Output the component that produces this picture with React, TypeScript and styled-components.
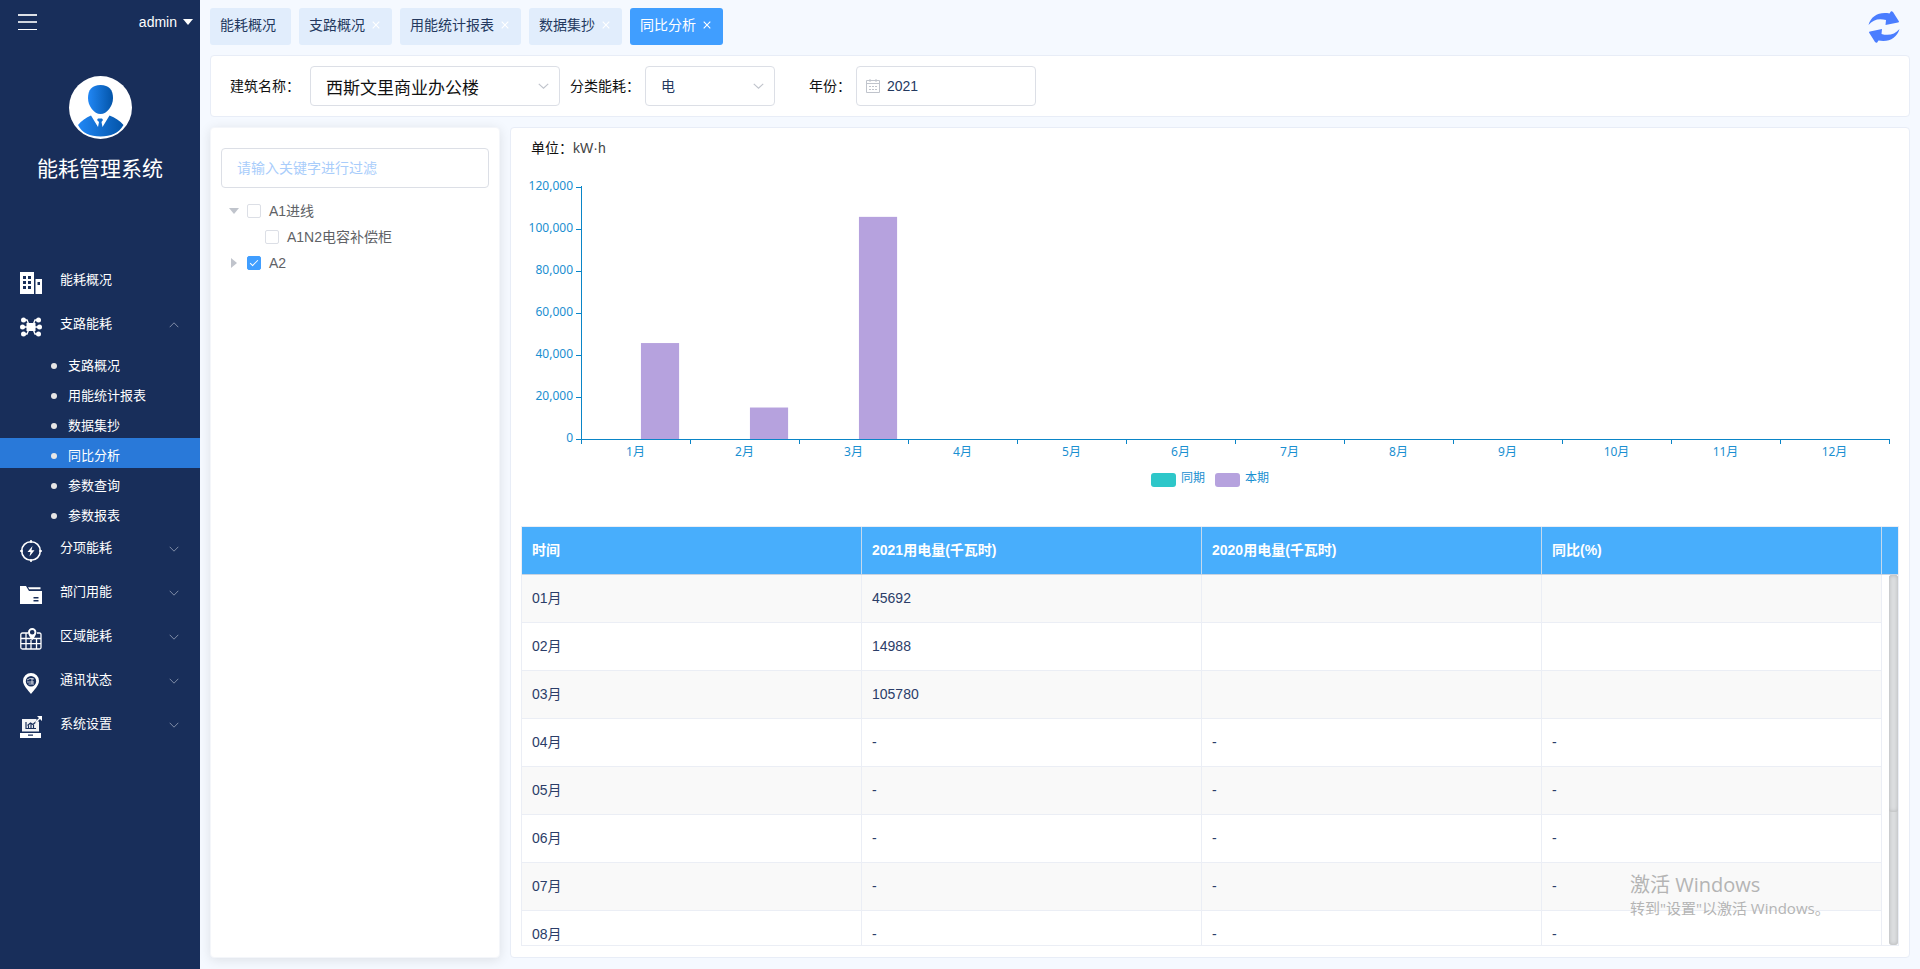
import React, { useLayoutEffect, useRef, useState } from 'react';
import styled, { createGlobalStyle } from 'styled-components';

const GlobalStyle = createGlobalStyle`
  *, *::before, *::after { box-sizing: border-box; }
  body {
    margin: 0;
    background: #f5f9ff;
    font-family: "Liberation Sans", "Noto Sans CJK SC", sans-serif;
    font-size: 14px;
    color: #111;
  }
  button, input, select { font-family: inherit; }
`;

const Shell = styled.div`
  display: flex;
  height: 100vh;
  min-height: 760px;
`;

/* ---------- Sidebar ---------- */

const Sidebar = styled.aside`
  flex: 0 0 200px;
  background: #182e5a;
  color: #fff;
`;

const SidebarTop = styled.div`
  display: flex;
  align-items: center;
  justify-content: space-between;
  height: 44px;
  padding: 0 7px 0 18px;
`;

const PlainButton = styled.button`
  display: flex;
  align-items: center;
  gap: 6px;
  padding: 0;
  border: 0;
  background: none;
  color: #fff;
  font-size: 14px;
  line-height: 20px;
  cursor: pointer;
`;

const Profile = styled.div`
  display: flex;
  flex-direction: column;
  align-items: center;
  height: 216px;
  padding-top: 32px;
`;

const SystemName = styled.h1`
  margin: 15px 0 0;
  font-size: 21px;
  font-weight: 400;
  line-height: 30px;
`;

const Menu = styled.ul`
  margin: 0;
  padding: 0;
  list-style: none;
`;

const MenuButton = styled.button`
  display: flex;
  align-items: center;
  width: 100%;
  height: 44px;
  padding: 0 21px 2px 20px;
  border: 0;
  background: none;
  color: #fff;
  font-size: 13px;
  line-height: 20px;
  cursor: pointer;

  svg:first-child { margin-top: 4px; }
  span {
    flex: 1;
    margin-left: 18px;
    padding-bottom: 2px;
    text-align: left;
  }
`;

const SubLink = styled.a<{ $active?: boolean }>`
  display: flex;
  align-items: center;
  gap: 11px;
  height: 30px;
  padding: 6px 0 0 51px;
  background: ${(p) => (p.$active ? '#2979d9' : 'transparent')};
  color: #fff;
  font-size: 13px;
  line-height: 20px;
  text-decoration: none;

  &::before {
    content: '';
    width: 6px;
    height: 6px;
    border-radius: 50%;
    background: #e6e6e6;
  }
`;

/* ---------- Content ---------- */

const Content = styled.main`
  flex: 1;
  min-width: 0;
  display: flex;
  flex-direction: column;
  gap: 10px;
  padding: 8px 10px 11px;
`;

const TopBar = styled.div`
  display: flex;
  align-items: center;
  justify-content: space-between;
  height: 37px;
  padding-right: 10px;
`;

const Tabs = styled.nav`
  display: flex;
  gap: 8px;
`;

const Tab = styled.div<{ $active?: boolean }>`
  display: flex;
  align-items: center;
  gap: 7px;
  height: 37px;
  min-width: 81px;
  padding: 0 12px 3px 10px;
  border-radius: 3px;
  background: ${(p) => (p.$active ? '#409eff' : '#e1edfc')};
  color: ${(p) => (p.$active ? '#fff' : '#24395f')};
  font-size: 14px;
  line-height: 20px;

  a {
    color: inherit;
    text-decoration: none;
  }
  button {
    display: flex;
    padding: 0;
    border: 0;
    background: none;
    color: #fff;
    cursor: pointer;
  }
`;

const Card = styled.section`
  border: 1px solid #e8edf7;
  border-radius: 4px;
  background: #fff;
`;

const FilterCard = styled(Card).attrs({ as: 'form' })`
  display: flex;
  align-items: center;
  height: 62px;
  padding: 0 19px;
`;

const FieldLabel = styled.label<{ $width: number }>`
  width: ${(p) => p.$width}px;
  font-size: 14px;
  line-height: 20px;
  white-space: nowrap;
`;

const Control = styled.div<{ $width?: number; $gap?: number }>`
  position: relative;
  width: ${(p) => (p.$width ? `${p.$width}px` : '100%')};
  margin-right: ${(p) => p.$gap ?? 0}px;

  svg {
    position: absolute;
    top: 50%;
    transform: translateY(-50%);
    pointer-events: none;
  }
  svg.arrow { right: 11px; }
  svg.prefix { left: 10px; }
`;

const boxStyle = `
  display: block;
  width: 100%;
  height: 40px;
  border: 1px solid #dcdfe6;
  border-radius: 4px;
  background: #fff;
  color: #24395f;
  outline: none;
`;

const Select = styled.select<{ $script?: boolean }>`
  ${boxStyle}
  appearance: none;
  padding: 0 30px 0 15px;
  font-size: ${(p) => (p.$script ? 17 : 14)}px;
  ${(p) => p.$script && 'color: #111; font-family: KaiTi, STKaiti, "Noto Sans CJK SC", sans-serif;'}
`;

const TextInput = styled.input<{ $prefix?: boolean }>`
  ${boxStyle}
  padding: 0 15px 0 ${(p) => (p.$prefix ? 30 : 15)}px;
  font-size: 14px;

  &::placeholder { color: #a9cdfb; opacity: 1; }
`;

const Columns = styled.div`
  flex: 1;
  min-height: 0;
  display: flex;
  gap: 10px;
`;

const TreeCard = styled(Card)`
  flex: 0 0 290px;
  padding: 20px 10px;
  border-color: #f4f6fa;
  box-shadow: 0 2px 12px rgba(0, 0, 0, 0.1);
`;

const Tree = styled.ul`
  margin: 10px 0 0;
  padding: 0;
  list-style: none;
`;

const TreeRow = styled.li<{ $level: number }>`
  display: flex;
  align-items: center;
  height: 26px;
  padding-left: ${(p) => p.$level * 18}px;
  color: #606266;
  font-size: 14px;
  line-height: 20px;

  button {
    display: flex;
    align-items: center;
    justify-content: center;
    width: 26px;
    height: 26px;
    padding: 0;
    border: 0;
    background: none;
  }
  label {
    display: flex;
    align-items: center;
    gap: 8px;
  }
`;

const Checkbox = styled.input.attrs({ type: 'checkbox' })`
  appearance: none;
  width: 14px;
  height: 14px;
  margin: 0;
  border: 1px solid #dcdfe6;
  border-radius: 2px;
  background: #fff;

  &:checked {
    border-color: #409eff;
    background: #409eff;
  }
  &:checked::after {
    content: '';
    display: block;
    width: 4px;
    height: 8px;
    margin: 1px 0 0 4px;
    border: solid #fff;
    border-width: 0 1px 1px 0;
    transform: rotate(45deg);
  }
`;

const DataCard = styled(Card)`
  position: relative;
  flex: 1;
  min-width: 0;
  display: flex;
  flex-direction: column;
  padding: 0 10px 11px;
`;

const Unit = styled.p`
  margin: 0;
  padding: 10px 10px;
  line-height: 20px;

  span { color: #444; }
`;

const ChartBox = styled.div`
  flex: 0 0 358px;

  svg { display: block; }
  text {
    fill: #1a8fd1;
    font-family: "Noto Sans", "Noto Sans CJK SC", sans-serif;
    font-size: 12px;
  }
`;

/* ---------- Table ---------- */

const TableFrame = styled.div`
  flex: 1;
  min-height: 0;
  display: flex;
  flex-direction: column;
  border: 1px solid #ebeef5;
`;

const TableHead = styled.div`
  flex: none;
  padding-right: 16px;
  border-bottom: 1px solid #c9d3e0;
  background: #48aefc;
`;

const TableBody = styled.div`
  flex: 1;
  min-height: 0;
  display: flex;
`;

const TableClip = styled.div`
  flex: 1;
  overflow: hidden;
`;

const Table = styled.table`
  width: 100%;
  table-layout: fixed;
  border-collapse: separate;
  border-spacing: 0;
  color: #2b3d68;
  font-size: 14px;
  line-height: 20px;
  text-align: left;

  th, td { padding: 0 10px 2px; }
  th {
    height: 47px;
    border-right: 1px solid #c5d9ec;
    color: #fff;
    font-weight: 700;
  }
  td {
    height: 48px;
    border-right: 1px solid #ebeef5;
    border-bottom: 1px solid #ebeef5;
  }
  tbody tr:nth-child(odd) td { background: #f9f9f9; }
`;

const ScrollTrack = styled.div`
  flex: 0 0 16px;
  padding-left: 7px;

  div {
    height: 100%;
    background: #dcdee0;
    border-radius: 3px;
    box-shadow: inset 0 0 4px rgba(0, 0, 0, 0.2);
  }
  div div {
    height: 64%;
  }
`;

const Watermark = styled.div`
  position: absolute;
  right: 79px;
  bottom: 39px;
  width: 200px;
  color: #b4b4b4;
  font-family: "Open Sans", "Noto Sans CJK SC", sans-serif;
  font-size: 15px;
  line-height: 20px;
  white-space: nowrap;
  pointer-events: none;

  strong {
    display: block;
    font-size: 20px;
    font-weight: 400;
    line-height: 27px;
  }
`;

/* ---------- Icons ---------- */

const Hamburger = () => (
  <svg width="19" height="17" fill="#fff" aria-hidden="true">
    <path d="M0 0h19v2H0z" opacity=".85" /><path d="M0 7h19v2H0z" opacity=".8" /><path d="M0 15h19v1H0z" />
  </svg>
);

const Avatar = () => (
  <svg width="63" height="63" viewBox="0 0 63 63" aria-hidden="true">
    <defs>
      <linearGradient id="blue" x1="0" x2="1">
        <stop offset="0" stopColor="#2187f5" />
        <stop offset="1" stopColor="#0354a8" />
      </linearGradient>
    </defs>
    <circle cx="31.500" cy="31.500" r="31.500" fill="#fff" />
    <path fill="url(#blue)" d="M31.500 9C40 9 44 14 44 22c0 8-6 16-12.500 16S19 30 19 22C19 14 23 9 31.500 9z" />
    <path fill="url(#blue)" d="M22 39.500L29 51l1-5-2-2 1-1.500h4l1 1.500-1.500 2 1 5 7-11.500C46 41.500 51 45 54.500 49 50 57 42 60.500 31.500 60.500S13 57 9 49c3.500-4 8-7.500 13-9.500z" />
  </svg>
);

const NavIcon = ({ children }: { children: React.ReactNode }) => (
  <svg width="22" height="22" viewBox="0 0 22 22" fill="#fff" stroke="none" aria-hidden="true">{children}</svg>
);

const icons: Record<string, React.ReactNode> = {
  building: (
    <path fillRule="evenodd" d="M0 0h14v22H0zM3 4v3h3V4zM8 4v3h3V4zM3 9v3h3V9zM8 9v3h3V9zM3 14v3h3v-3zM8 14v3h3v-3zM15.500 7H22v15h-6.500zM17.500 10v3h2.500v-3z" />
  ),
  branch: (
    <>
      <path d="M6.500 7h9v8h-9z" />
      <path d="M2 11h18M4 4h3l2 5M18 4h-3l-2 5M4 18h3l2-5M18 18h-3l-2-5" fill="none" stroke="#fff" strokeWidth="1.400" />
      <circle cx="3.500" cy="4" r="2.500" /><circle cx="18.500" cy="4" r="2.500" />
      <circle cx="2.500" cy="11" r="2.500" /><circle cx="19.500" cy="11" r="2.500" />
      <circle cx="3.500" cy="18" r="2.500" /><circle cx="18.500" cy="18" r="2.500" />
    </>
  ),
  energy: (
    <>
      <circle cx="11" cy="11" r="9.300" fill="none" stroke="#fff" strokeWidth="1.600" />
      <path d="M11 0v3M11 19v3M0 11h3M19 11h3" stroke="#fff" strokeWidth="1.600" />
      <path d="M12.500 6L7.500 12H10.500L9.500 16.500 14.500 10.200H11.500z" />
    </>
  ),
  folder: (
    <path fillRule="evenodd" d="M0 2h6l3 5h13V20H0zM8 3.200h12.500V5.200H9.300zM13.500 13v1.400h5V13zM13.500 16v1.400h5V16z" />
  ),
  region: (
    <>
      <path d="M8 5H2.500Q.8 5 .8 6.500V19.500Q.8 21 2.500 21H19.500Q21 21 21 19.500V6.500Q21 5 19.500 5H17M.8 10.500H21M.8 15.700H21M6 5V21M11 12V21M16.500 10V21" fill="none" stroke="#fff" strokeWidth="1.300" />
      <path fillRule="evenodd" d="M12.200 0a4.200 4.200 0 0 1 4.200 4.200c0 3-4.200 8-4.200 8S8 7.200 8 4.200A4.200 4.200 0 0 1 12.200 0zM12.200 2a2.300 2.300 0 1 0 0 4.600 2.300 2.300 0 0 0 0-4.600z" />
    </>
  ),
  pin: (
    <>
      <path fillRule="evenodd" d="M11 1a8 8 0 0 1 8 8c0 4.500-5 9-8 13-3-4-8-8.500-8-13a8 8 0 0 1 8-8zM11 4a5.200 5.200 0 1 0 0 10.400A5.200 5.200 0 0 0 11 4z" />
      <path d="M7 8l3-1.500 4 .5M7 10h7M8.500 12H14M12 6v6" fill="none" stroke="#fff" strokeWidth="1" opacity=".75" />
    </>
  ),
  settings: (
    <>
      <path d="M2 3h14l1.500 1.500L19 6v9.500H2z" opacity=".95" />
      <path fillRule="evenodd" d="M0 17h21v5H0zM8 18.500v1.200h5v-1.200z" />
      <path d="M6 6v6.500h10M8.500 12V9.500M11 12V7.500M13.500 12V9M7.500 9.500l3-2.500 2.500 1.500L19 3" fill="none" stroke="#182e5a" strokeWidth="1.200" />
      <path d="M17 0h5v5zM15 6l4-4 1 1-4 4z" />
    </>
  ),
};

const Chevron = ({ up, size = 10, color = '#7f8ca6' }: { up?: boolean; size?: number; color?: string }) => (
  <svg className="arrow" width={size} height="6" viewBox="0 0 10 6" preserveAspectRatio="none" fill="none" stroke={color} aria-hidden="true">
    <path d={up ? 'M.7 5.200L5 .8 9.300 5.200' : 'M.7.8L5 5.200 9.300.8'} />
  </svg>
);

const Cross = () => (
  <svg width="8" height="8" stroke="currentColor" strokeWidth="1.100" aria-hidden="true">
    <path d="M.7.7l6.600 6.600M7.300.7L.7 7.300" />
  </svg>
);

const Refresh = () => (
  <svg width="32" height="32" viewBox="0 0 32 32" fill="#4a7dff" aria-hidden="true">
    <path d="M.5 14C3 5 11 .5 21.500 2.500L23 .3Q24 0 25 1l6 9.500Q31 11.500 30 11.500L17.500 14 18 9C11 7 5 8.500.5 14z" />
    <path d="M31.500 18C29 27 21 31.500 10.500 29.500L9 31.700Q8 32 7 31L1 21.500Q1 20.500 2 20.500L14 18l-.5 5C20.500 25 27 23.500 31.500 18z" />
  </svg>
);

const Calendar = () => (
  <svg className="prefix" width="14" height="14" viewBox="0 0 14 14" fill="none" stroke="#c0c4cc" aria-hidden="true">
    <path d="M.5 1.500h13v12H.5zM.5 4.500h13M4 0v3M10 0v3M3 7.500h2M6 7.500h2M9 7.500h2M3 10.500h2M6 10.500h2M9 10.500h2" />
  </svg>
);

/* ---------- Data ---------- */

const menuTop = [
  { label: '能耗概况', icon: 'building' },
  { label: '支路能耗', icon: 'branch', open: true },
];
const subMenu = ['支路概况', '用能统计报表', '数据集抄', '同比分析', '参数查询', '参数报表'];
const menuBottom = [
  { label: '分项能耗', icon: 'energy' },
  { label: '部门用能', icon: 'folder' },
  { label: '区域能耗', icon: 'region' },
  { label: '通讯状态', icon: 'pin' },
  { label: '系统设置', icon: 'settings' },
];
const tabs = ['能耗概况', '支路概况', '用能统计报表', '数据集抄', '同比分析'];
const current = '同比分析';
const usage = [45692, 14988, 105780];
const rows = Array.from({ length: 8 }, (_, i) => {
  const month = `${String(i + 1).padStart(2, '0')}月`;
  return i < usage.length ? [month, String(usage[i]), '', ''] : [month, '-', '-', '-'];
});

/* ---------- Chart ---------- */

const AXIS = '#0a85c7';
const PLOT = { left: 60, right: 10, top: 19, height: 252 };
const MAX = 120000;

function UsageChart() {
  const ref = useRef<HTMLDivElement>(null);
  const [width, setWidth] = useState(1378);

  useLayoutEffect(() => {
    const box = ref.current;
    if (!box) return;
    const measure = () => setWidth(box.clientWidth);
    measure();
    const observer = new ResizeObserver(measure);
    observer.observe(box);
    return () => observer.disconnect();
  }, []);

  const plotWidth = width - PLOT.left - PLOT.right;
  const band = plotWidth / 12;
  const base = PLOT.top + PLOT.height;
  const mid = PLOT.left + plotWidth / 2;

  return (
    <ChartBox ref={ref}>
      <svg width={width} height="358" role="img" aria-label="同期与本期用电量对比">
        {usage.map((value, i) => {
          const h = (value / MAX) * PLOT.height;
          return (
            <rect key={i} x={PLOT.left + band * (i + 0.55)} y={base - h} width={band * 0.35} height={h} fill="#b6a2de" />
          );
        })}
        <g fill={AXIS} shapeRendering="crispEdges">
          <rect x={PLOT.left} y={PLOT.top - 1} width="1" height={PLOT.height + 1} />
          <rect x={PLOT.left} y={base} width={plotWidth + 1} height="1" />
          {Array.from({ length: 7 }, (_, i) => (
            <rect key={i} x={PLOT.left - 5} y={base - i * 42} width="5" height="1" />
          ))}
          {Array.from({ length: 13 }, (_, i) => (
            <rect key={i} x={Math.round(PLOT.left + band * i)} y={base} width="1" height="5" />
          ))}
        </g>
        {Array.from({ length: 7 }, (_, i) => (
          <text key={i} x={PLOT.left - 8} y={base - i * 42 + 3} textAnchor="end">
            {(i * 20000).toLocaleString('en-US')}
          </text>
        ))}
        {Array.from({ length: 12 }, (_, i) => (
          <text key={i} x={PLOT.left + band * (i + 0.5)} y={base + 17} textAnchor="middle">{i + 1}月</text>
        ))}
        <rect x={mid - 84} y="305" width="25" height="14" rx="3" fill="#2ec7c9" />
        <text x={mid - 54} y="314">同期</text>
        <rect x={mid - 20} y="305" width="25" height="14" rx="3" fill="#b6a2de" />
        <text x={mid + 10} y="314">本期</text>
      </svg>
    </ChartBox>
  );
}

type MenuEntry = { label: string; icon: string; open?: boolean };

const MenuEntryButton = ({ entry }: { entry: MenuEntry }) => (
  <MenuButton type="button" aria-expanded={entry.open}>
    <NavIcon>{icons[entry.icon]}</NavIcon>
    <span>{entry.label}</span>
    {entry.icon !== 'building' && <Chevron up={entry.open} />}
  </MenuButton>
);

export default function App() {
  return (
    <>
      <GlobalStyle />
      <Shell>
        <Sidebar>
          <SidebarTop>
            <PlainButton type="button" aria-label="菜单"><Hamburger /></PlainButton>
            <PlainButton type="button">
              admin
              <svg width="10" height="6" fill="#fff" aria-hidden="true"><path d="M0 0h10L5 6z" /></svg>
            </PlainButton>
          </SidebarTop>
          <Profile>
            <Avatar />
            <SystemName>能耗管理系统</SystemName>
          </Profile>
          <Menu>
            {menuTop.map((entry) => (
              <li key={entry.label}>
                <MenuEntryButton entry={entry} />
                {entry.open && (
                  <Menu>
                    {subMenu.map((label) => (
                      <li key={label}><SubLink href="#" $active={label === current}>{label}</SubLink></li>
                    ))}
                  </Menu>
                )}
              </li>
            ))}
            {menuBottom.map((entry) => <li key={entry.label}><MenuEntryButton entry={entry} /></li>)}
          </Menu>
        </Sidebar>

        <Content>
          <TopBar>
            <Tabs>
              {tabs.map((label, i) => (
                <Tab key={label} $active={label === current}>
                  <a href="#">{label}</a>
                  {i > 0 && <button type="button" aria-label={`关闭${label}`}><Cross /></button>}
                </Tab>
              ))}
            </Tabs>
            <PlainButton type="button" aria-label="刷新"><Refresh /></PlainButton>
          </TopBar>

          <FilterCard>
            <FieldLabel htmlFor="building" $width={80}>建筑名称：</FieldLabel>
            <Control $width={250} $gap={10}>
              <Select id="building" $script><option>西斯文里商业办公楼</option></Select>
              <Chevron color="#c0c4cc" size={11} />
            </Control>
            <FieldLabel htmlFor="category" $width={75}>分类能耗：</FieldLabel>
            <Control $width={130} $gap={34}>
              <Select id="category"><option>电</option></Select>
              <Chevron color="#c0c4cc" size={11} />
            </Control>
            <FieldLabel htmlFor="year" $width={47}>年份：</FieldLabel>
            <Control $width={180}>
              <TextInput id="year" $prefix defaultValue="2021" />
              <Calendar />
            </Control>
          </FilterCard>

          <Columns>
            <TreeCard>
              <TextInput aria-label="过滤" placeholder="请输入关键字进行过滤" />
              <Tree>
                <TreeRow $level={0}>
                  <button type="button" aria-label="收起">
                    <svg width="10" height="6" fill="#c0c4cc"><path d="M0 0h10L5 6z" /></svg>
                  </button>
                  <label><Checkbox />A1进线</label>
                </TreeRow>
                <TreeRow $level={1}>
                  <button type="button" aria-label="子项" />
                  <label><Checkbox />A1N2电容补偿柜</label>
                </TreeRow>
                <TreeRow $level={0}>
                  <button type="button" aria-label="展开">
                    <svg width="6" height="10" fill="#c0c4cc"><path d="M0 0v10l6-5z" /></svg>
                  </button>
                  <label><Checkbox defaultChecked />A2</label>
                </TreeRow>
              </Tree>
            </TreeCard>

            <DataCard>
              <Unit>单位：<span>kW·h</span></Unit>
              <UsageChart />
              <TableFrame>
                <TableHead>
                  <Table>
                    <thead>
                      <tr><th>时间</th><th>2021用电量(千瓦时)</th><th>2020用电量(千瓦时)</th><th>同比(%)</th></tr>
                    </thead>
                  </Table>
                </TableHead>
                <TableBody>
                  <TableClip>
                    <Table>
                      <tbody>
                        {rows.map((row) => (
                          <tr key={row[0]}>{row.map((cell, i) => <td key={i}>{cell}</td>)}</tr>
                        ))}
                      </tbody>
                    </Table>
                  </TableClip>
                  <ScrollTrack><div><div /></div></ScrollTrack>
                </TableBody>
              </TableFrame>
              <Watermark>
                <strong>激活 Windows</strong>
                <span>转到"设置"以激活 Windows。</span>
              </Watermark>
            </DataCard>
          </Columns>
        </Content>
      </Shell>
    </>
  );
}
